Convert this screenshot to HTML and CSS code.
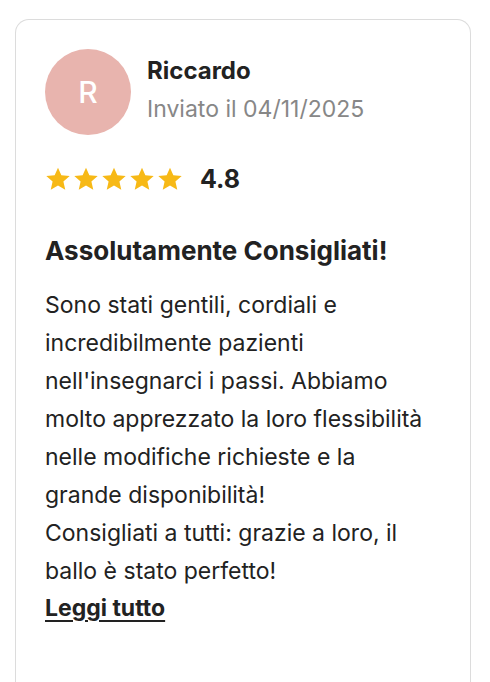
FILE: index.html
```html
<!DOCTYPE html>
<html lang="it">
<head>
  <meta charset="UTF-8">
  <meta name="viewport" content="width=device-width, initial-scale=1.0">
  <title>Recensione</title>
  <link rel="stylesheet" href="styles.css">
</head>
<body>
  <div class="review-card">
    <div class="review-header">
      <div class="avatar">R</div>
      <div class="author">
        <div class="author-name">Riccardo</div>
        <div class="review-date">Inviato il 04/11/2025</div>
      </div>
    </div>

    <div class="rating">
      <div class="stars">
        <svg class="star" viewBox="0 0 24 24"><path d="M12 1.5l3.1 7.1 7.7.7-5.8 5.1 1.7 7.6L12 18l-6.7 4 1.7-7.6-5.8-5.1 7.7-.7z"/></svg>
        <svg class="star" viewBox="0 0 24 24"><path d="M12 1.5l3.1 7.1 7.7.7-5.8 5.1 1.7 7.6L12 18l-6.7 4 1.7-7.6-5.8-5.1 7.7-.7z"/></svg>
        <svg class="star" viewBox="0 0 24 24"><path d="M12 1.5l3.1 7.1 7.7.7-5.8 5.1 1.7 7.6L12 18l-6.7 4 1.7-7.6-5.8-5.1 7.7-.7z"/></svg>
        <svg class="star" viewBox="0 0 24 24"><path d="M12 1.5l3.1 7.1 7.7.7-5.8 5.1 1.7 7.6L12 18l-6.7 4 1.7-7.6-5.8-5.1 7.7-.7z"/></svg>
        <svg class="star" viewBox="0 0 24 24"><path d="M12 1.5l3.1 7.1 7.7.7-5.8 5.1 1.7 7.6L12 18l-6.7 4 1.7-7.6-5.8-5.1 7.7-.7z"/></svg>
      </div>
      <span class="score">4.8</span>
    </div>

    <h2 class="review-title">Assolutamente Consigliati!</h2>
    <p class="review-text">
      Sono stati gentili, cordiali e incredibilmente pazienti nell'insegnarci i passi. Abbiamo molto apprezzato la loro flessibilità nelle modifiche richieste e la grande disponibilità!<br>
      Consigliati a tutti: grazie a loro, il ballo è stato perfetto!
    </p>
    <a href="#" class="read-more">Leggi tutto</a>
  </div>
</body>
</html>
```

FILE: styles.css
```css
/* Reset di base */
* {
  margin: 0;
  padding: 0;
  box-sizing: border-box;
}

body {
  background-color: #ffffff;
  font-family: 'Inter', 'Liberation Sans', sans-serif;
  color: #222222;
  padding: 19px 19px 0 15px;
}

.review-card {
  border: 1px solid #dcdcdc;
  border-bottom: none;
  border-radius: 14px 14px 0 0;
  padding: 29px 39px 60px 29px;
  min-height: 680px;
}

.review-header {
  display: flex;
  align-items: flex-start;
  gap: 16px;
}

.avatar {
  width: 86px;
  height: 86px;
  border-radius: 50%;
  background-color: #e8b4ae;
  color: #ffffff;
  font-size: 30px;
  font-weight: 500;
  display: flex;
  justify-content: center;
  align-items: center;
  flex-shrink: 0;
}

.author {
  margin-top: 7px;
}

.author-name {
  font-size: 24px;
  font-weight: 700;
  color: #222222;
  line-height: 30px;
}

.review-date {
  font-size: 23px;
  color: #878787;
  line-height: 30px;
  margin-top: 8px;
}

.rating {
  display: flex;
  align-items: center;
  gap: 17px;
  margin-top: 31px;
}

.stars {
  display: flex;
  gap: 2px;
}

.star {
  width: 26px;
  height: 26px;
  fill: #f7b916;
}

.score {
  font-size: 25px;
  font-weight: 700;
  line-height: 25px;
}

.review-title {
  font-size: 26px;
  font-weight: 700;
  margin-top: 43px;
  line-height: 32px;
}

.review-text {
  font-size: 23px;
  line-height: 38px;
  margin-top: 19px;
  color: #222222;
}

.read-more {
  display: inline-block;
  font-size: 23px;
  font-weight: 700;
  line-height: 36px;
  color: #222222;
  text-decoration: underline;
  text-underline-offset: 4px;
}
```
